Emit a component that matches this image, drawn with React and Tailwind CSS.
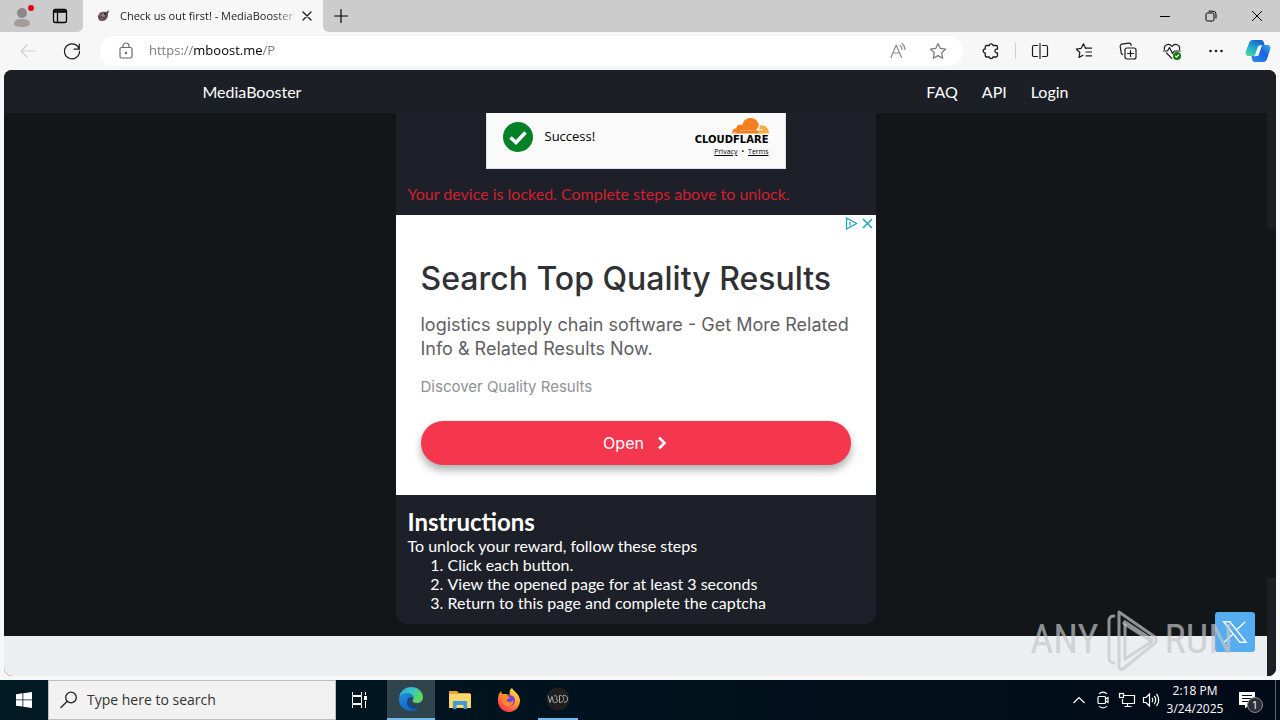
import { useState } from "react";

const steps = [
  "Click each button.",
  "View the opened page for at least 3 seconds",
  "Return to this page and complete the captcha",
];

function Icon({ size = 20, width = 1.2, className = "", children }) {
  return (
    <svg
      width={size}
      height={size}
      viewBox="0 0 20 20"
      fill="none"
      stroke="currentColor"
      strokeWidth={width}
      strokeLinecap="round"
      strokeLinejoin="round"
      className={className}
      aria-hidden="true"
    >
      {children}
    </svg>
  );
}

function ToolButton({ label, className = "text-[#1b1b1b]", children }) {
  return (
    <button
      aria-label={label}
      className={`flex h-8 w-11 shrink-0 items-center justify-center ${className}`}
    >
      {children}
    </button>
  );
}

function WindowButton({ label, children }) {
  return (
    <button
      aria-label={label}
      className="flex h-8 w-[46px] items-center justify-center text-black"
    >
      <svg
        width="12"
        height="12"
        viewBox="0 0 12 12"
        fill="none"
        stroke="currentColor"
        aria-hidden="true"
      >
        {children}
      </svg>
    </button>
  );
}

function TabStrip() {
  return (
    <div className="flex h-8 shrink-0 bg-[#f7f7f7]">
      <div className="flex w-[83px] shrink-0 items-center rounded-br-md bg-[#cccccc] pl-2">
        <button aria-label="Profile" className="flex w-8 justify-center pr-1">
          <svg width="28" height="28" viewBox="0 0 28 28" aria-hidden="true">
            <circle cx="14" cy="11" r="5" fill="#8b8785" />
            <path d="M6 22c0-4 4-5 8-5s8 1 8 5c0 2-4 3-8 3s-8-1-8-3z" fill="#a19d9b" />
            <circle cx="23" cy="6" r="3" fill="#e3000f" />
          </svg>
        </button>
        <button
          aria-label="Tab actions"
          className="flex w-10 justify-center text-black"
        >
          <Icon size={20} width={1.3}>
            <rect x="3.5" y="3.5" width="13" height="13" rx="2" />
            <path d="M4.500 5.500h11" strokeWidth="2.6" />
            <path d="M7.5 7v9" />
          </Icon>
        </button>
      </div>
      <div className="flex w-60 shrink-0 items-center rounded-t-lg bg-[#f7f7f7] pr-1 pl-3">
        <svg width="16" height="16" viewBox="0 0 16 16" aria-hidden="true">
          <path d="M3 8c1-4 5-5 8-4l3-2-1 4c0 4-2 7-6 7-3 0-4-2-4-5z" fill="#5c4f52" />
          <path d="M4 5l3 2-3 1zM5 11l3-1-1 3z" fill="#c0485a" />
          <path d="M8 5l3 1-2 3-3-1z" fill="#8f8a90" />
          <circle cx="10" cy="6" r="1" fill="#1d1a1c" />
        </svg>
        <span className="ml-[9px] min-w-0 flex-1 text-[11px] whitespace-nowrap text-[#1b1b1b] [mask-image:linear-gradient(90deg,#000_88%,rgba(0,0,0,0.2))]">
          Check us out first! - MediaBooster
        </span>
        <button
          aria-label="Close tab"
          className="flex w-6 shrink-0 justify-center text-[#1b1b1b]"
        >
          <Icon size={16} width={1.6}>
            <path d="M5 5l10 10M15 5L5 15" />
          </Icon>
        </button>
      </div>
      <div className="flex min-w-0 flex-1 items-center justify-between rounded-bl-md bg-[#cccccc]">
        <button
          aria-label="New tab"
          className="flex h-8 w-9 items-center justify-center text-black"
        >
          <Icon>
            <path d="M10 3.5v13M3.5 10h13" />
          </Icon>
        </button>
        <div className="flex">
          <WindowButton label="Minimize">
            <path d="M1 6.5h10" />
          </WindowButton>
          <WindowButton label="Restore">
            <rect x="1" y="3" width="8" height="8" rx="1.5" />
            <path d="M3.5 1.2h4.5a3 3 0 0 1 3 3v4.3" />
          </WindowButton>
          <WindowButton label="Close">
            <path d="M1 1l10 10M11 1L1 11" />
          </WindowButton>
        </div>
      </div>
    </div>
  );
}

function Toolbar() {
  const [url, setUrl] = useState("https://mboost.me/P");

  return (
    <div className="flex h-[38px] shrink-0 items-center bg-[#f7f7f7] pr-0.5 pl-1.5">
      <ToolButton label="Back" className="text-[#cfcfcf]">
        <Icon>
          <path d="M17 10H3M9 4l-6 6 6 6" />
        </Icon>
      </ToolButton>
      <ToolButton label="Refresh">
        <Icon>
          <path d="M17.2 8.2A7.5 7.5 0 1 0 17.5 10M17.3 3v5.2h-5.2" />
        </Icon>
      </ToolButton>
      <div className="mx-1.5 flex h-[30px] min-w-0 flex-1 items-center rounded-full bg-white pl-4">
        <Icon className="shrink-0 text-[#6b6b6b]">
          <rect x="4" y="6.5" width="12" height="10.5" rx="1.5" />
          <path d="M7 6.5V5a3 3 0 0 1 6 0v1.5" />
          <circle cx="10" cy="12" r=".6" fill="currentColor" />
        </Icon>
        <input
          aria-label="Address"
          value={url}
          onChange={(e) => setUrl(e.target.value)}
          className="ml-[13px] min-w-0 flex-1 bg-[linear-gradient(90deg,#767676_44px,#000_44px,#000_113px,#767676_113px)] bg-clip-text text-[13px] text-transparent outline-none"
        />
        <button aria-label="Read aloud" className="flex w-10 justify-center text-[#8a8a8a]">
          <Icon>
            <path d="M3 16.5L8.2 4l5.3 12.500M5 12h6.500" />
            <path d="M12 4.500a5 5 0 0 1 2 4M14 2.500a8 8 0 0 1 3 6" />
          </Icon>
        </button>
        <button
          aria-label="Add to favorites"
          className="mr-[5px] flex w-10 justify-center text-[#767676]"
        >
          <Icon>
            <path d="M10 2.500l2.300 4.900 5.300.7-3.900 3.700 1 5.400L10 14.600l-4.700 2.600 1-5.400L2.400 8.100l5.300-.7z" />
          </Icon>
        </button>
      </div>
      <ToolButton label="Extensions">
        <Icon width={1.3}>
          <path d="M5.500 4.500h2.700a2 2 0 0 1 3.900 0h2.900a1.500 1.500 0 0 1 1.500 1.500v2.200h-.8a1.800 1.800 0 0 0 0 3.600h.8V14.500A1.500 1.500 0 0 1 15 16h-2.900a2 2 0 0 1-3.900 0H5.500A1.500 1.500 0 0 1 4.200 14.500v-2.500a2 2 0 0 1 0-4V6a1.500 1.500 0 0 1 1.300-1.500z" />
        </Icon>
      </ToolButton>
      <span className="mx-0.5 h-4 w-px shrink-0 bg-[#cfcfcf]" />
      <ToolButton label="Split screen">
        <Icon>
          <path d="M7.500 4.500H4A1.500 1.500 0 0 0 2.500 6v8A1.500 1.500 0 0 0 4 15.500h3.500M12.500 4.500H16A1.500 1.500 0 0 1 17.500 6v8a1.500 1.500 0 0 1-1.500 1.500h-3.500M10 2.500v15" />
        </Icon>
      </ToolButton>
      <ToolButton label="Favorites">
        <Icon>
          <path d="M11.500 7.200L9.400 2.800 7.200 7.300l-4.900.7 3.500 3.500-.8 4.900 4-2.100" />
          <path d="M11.500 7.200H17.500M12 11h5.500M12 14.800h5.500" />
        </Icon>
      </ToolButton>
      <ToolButton label="Collections">
        <Icon>
          <rect x="7" y="7" width="11" height="11" rx="2" />
          <path d="M12.500 9.500v6M9.500 12.500h6M4.800 13.500A2 2 0 0 1 3.200 11.800L2.200 5.500a2 2 0 0 1 1.700-2.300l7-1a2 2 0 0 1 2.200 1.700v.4" />
        </Icon>
      </ToolButton>
      <ToolButton label="Browser essentials">
        <Icon>
          <path d="M2.500 8.500C1.500 4 7 1.500 10 5.500c3-4 8.500-1.500 7.500 3M4.500 12l5.300 5.300" />
          <path d="M1.500 10h4l2-3.500 3 6 1.800-2.500h6" />
          <circle cx="15" cy="15" r="3.400" fill="#107c10" stroke="#107c10" />
          <path d="M13.500 15.200l1 1 2-2.200" stroke="#fff" />
        </Icon>
      </ToolButton>
      <ToolButton label="Settings and more">
        <svg width="20" height="20" viewBox="0 0 20 20" fill="currentColor" aria-hidden="true">
          <circle cx="4.500" cy="10" r="1.300" />
          <circle cx="10" cy="10" r="1.300" />
          <circle cx="15.500" cy="10" r="1.300" />
        </svg>
      </ToolButton>
      <button aria-label="Copilot" className="flex w-10 shrink-0 justify-center">
        <svg width="26" height="26" viewBox="0 0 26 26" aria-hidden="true">
          <defs>
            <linearGradient id="copilotLeft" x1="0" y1="1" x2="0.600" y2="0">
              <stop offset="0" stopColor="#5fdc8a" />
              <stop offset="0.500" stopColor="#1fb0d0" />
              <stop offset="1" stopColor="#1667c8" />
            </linearGradient>
            <linearGradient id="copilotRight" x1="0" y1="1" x2="1" y2="0">
              <stop offset="0" stopColor="#2a8cf5" />
              <stop offset="0.600" stopColor="#1b62dc" />
              <stop offset="1" stopColor="#35b5f5" />
            </linearGradient>
          </defs>
          <path
            d="M8 2h8c2 0 2.500 1 3 3l.5 2h-3c-2 0-3 1-3.500 3l-1.500 5c-.5 2-1.500 3-3.500 3H4c-3 0-4-2-3-5L4 5c.7-2 2-3 4-3z"
            fill="url(#copilotLeft)"
          />
          <path
            d="M18 24h-8c-2 0-2.500-1-3-3l-.5-3H9c2 0 3-1 3.500-3L14 10c.500-2 1.500-3 3.500-3H22c3 0 4 2 3 5l-3 9c-.7 2-2 3-4 3z"
            fill="url(#copilotRight)"
          />
          <path d="M13 8.500l4-1.500-3.500 10.500-4 1z" fill="#fff" />
        </svg>
      </button>
    </div>
  );
}

function SiteNav() {
  return (
    <nav className="h-[43px] shrink-0 bg-[#1d1f27] px-4 text-base text-white">
      <div className="mx-auto flex h-full w-full max-w-[866px] items-center justify-between">
        <a href="#home">MediaBooster</a>
        <div className="flex gap-6">
          <a href="#faq">FAQ</a>
          <a href="#api">API</a>
          <a href="#login">Login</a>
        </div>
      </div>
    </nav>
  );
}

function Captcha() {
  return (
    <div className="mx-auto flex h-14 w-full max-w-[300px] justify-between border border-t-0 border-[#e0e0e0] bg-[#fafafa] px-4 font-['Open_Sans','Noto_Sans',sans-serif] text-black">
      <div className="flex items-center gap-3 pb-2">
        <svg width="30" height="30" viewBox="0 0 30 30" aria-hidden="true">
          <circle cx="15" cy="15" r="15" fill="#038127" />
          <path d="M7.500 15.500l5.500 5 9.500-10" fill="none" stroke="#fff" strokeWidth="3.600" />
        </svg>
        <span className="text-[13px]">Success!</span>
      </div>
      <div className="flex flex-col items-end pt-1">
        <svg width="37" height="17" viewBox="0 0 37 17" aria-hidden="true">
          <path
            d="M0 16.500C0 13 2 11.300 4.500 11.300 4 8 8 6.500 10.300 8 12-1 25-2 27 8.500l-1.500 5c-.3 1-1 1.500-2 1.500H3z"
            fill="#f38020"
          />
          <path d="M28 8.500c5-1 9 3 9 8H24l2.500-1.500z" fill="#faae40" />
          <path d="M0 16.500h26l1-2.500H8z" fill="#f38020" />
          <path d="M8 13h16l3-4-1 3.500h5v.7H8z" fill="#fff" />
        </svg>
        <span className="font-['DejaVu_Sans',sans-serif] text-[10px] leading-[11px] font-bold">
          CLOUDFLARE
        </span>
        <div className="flex gap-1 pt-0.5 text-[7px] leading-[10px]">
          <a href="#privacy" className="underline">
            Privacy
          </a>
          <span>•</span>
          <a href="#terms" className="underline">
            Terms
          </a>
        </div>
      </div>
    </div>
  );
}

function Ad() {
  return (
    <section className="bg-white px-[25px] pt-0.5 pb-[30px] font-['Inter',sans-serif]">
      <div className="-mr-[23px] flex h-3 items-center justify-end gap-[3px]">
        <a href="#adchoices" aria-label="AdChoices">
          <svg width="13" height="13" viewBox="0 0 13 13" fill="none" stroke="#1fa7b8" strokeWidth="1.300" aria-hidden="true">
            <path d="M1.500 1l10 5.500-10 5.500z" />
            <path d="M5 5v3.500" />
          </svg>
        </a>
        <button aria-label="Close ad">
          <svg width="13" height="13" viewBox="0 0 13 13" stroke="#1fa7b8" strokeWidth="1.500" aria-hidden="true">
            <path d="M2 2l9 9M11 2l-9 9" />
          </svg>
        </button>
      </div>
      <h2 className="pt-[30px] text-[32px] leading-10 font-medium whitespace-nowrap text-[#303134]">
        Search Top Quality Results
      </h2>
      <p className="pt-3.5 text-lg leading-6 whitespace-nowrap text-[#5f6063]">
        logistics supply chain software - Get More Related
        <br />
        Info &amp; Related Results Now.
      </p>
      <p className="pt-3.5 text-[15px] leading-6 text-[#909194]">Discover Quality Results</p>
      <button className="mt-[22px] flex h-11 w-full items-center justify-center gap-3 rounded-full bg-[#f4364e] text-base text-white shadow-[0_5px_9px_rgba(0,20,20,0.350)]">
        Open
        <svg width="12" height="14" viewBox="0 0 12 14" fill="none" stroke="currentColor" strokeWidth="2.600" aria-hidden="true">
          <path d="M3 1.500L8.500 7 3 12.500" />
        </svg>
      </button>
    </section>
  );
}

function Watermark() {
  return (
    <div
      aria-hidden="true"
      className="pointer-events-none absolute right-[43px] bottom-0 flex items-center gap-1.5 font-['Roboto_Condensed','Roboto',sans-serif] text-[40px] leading-[72px] text-[#c4c6c8]/70"
    >
      <span>ANY</span>
      <svg width="54" height="66" viewBox="0 0 54 66" fill="none" stroke="currentColor" strokeLinejoin="round" strokeLinecap="round">
        <path d="M14 5v54M9 9a5 5 0 0 0-5 4v38a5 5 0 0 0 5 5M14 5l36 25a4 4 0 0 1 0 6L18 62c-3 1-4-1-4-3" strokeWidth="3" />
        <path d="M20 18v34l26-17" strokeWidth="3" />
        <path d="M20 16l26 17" strokeWidth="5" />
      </svg>
      <span>RUN</span>
    </div>
  );
}

function Page() {
  return (
    <div className="relative mx-1 mb-1 flex min-h-0 flex-1 overflow-hidden rounded-lg bg-[#131619] font-['Lato',sans-serif]">
      <div className="flex min-w-0 flex-1 flex-col">
        <SiteNav />
        <main className="mx-auto mb-3 w-full max-w-[480px] rounded-b-xl bg-[#1d2028] pb-3 text-base leading-[19px] text-white">
          <Captcha />
          <p className="px-3 pt-[15px] pb-3 text-[#d11f2f]">
            Your device is locked. Complete steps above to unlock.
          </p>
          <Ad />
          <div className="px-3 pt-3">
            <h1 className="text-2xl leading-[29px] font-bold">Instructions</h1>
            <p>To unlock your reward, follow these steps</p>
            <ol className="list-decimal pl-10">
              {steps.map((step) => (
                <li key={step}>{step}</li>
              ))}
            </ol>
          </div>
        </main>
        <footer className="min-h-10 flex-1 bg-[#eceff1]" />
      </div>
      <div className="flex w-[9px] shrink-0 flex-col justify-between bg-[#16151b]">
        <div className="h-[158px] bg-[#1f1e27]" />
        <div className="h-[98px] bg-[#1f1e27]" />
      </div>
      <a
        href="#share"
        aria-label="Share on X"
        className="absolute right-[21px] bottom-6 flex size-10 items-center justify-center rounded-[3px] bg-[#55acee] text-white"
      >
        <svg width="26" height="26" viewBox="0 0 24 24" fill="none" stroke="currentColor" strokeWidth="1.300" aria-hidden="true">
          <path d="M1.500 2.500h5.800l15 19h-5.800zM21.500 2.500l-8.400 7.800M10.400 13.600L2 21.500" />
        </svg>
      </a>
      <Watermark />
    </div>
  );
}

function Taskbar() {
  return (
    <div className="flex h-10 shrink-0 bg-linear-to-r from-[#001a23] via-[#00121d] to-[#030a18] text-white">
      <button aria-label="Start" className="flex w-12 shrink-0 items-center justify-center">
        <svg width="16" height="16" viewBox="0 0 16 16" fill="currentColor" aria-hidden="true">
          <path d="M0 2.200l6.500-.9v6.200H0zM7.300 1.200L16 0v7.500H7.300zM0 8.300h6.500v6.300L0 13.700zM7.300 8.300H16V16l-8.700-1.200z" />
        </svg>
      </button>
      <label className="flex w-72 shrink-0 items-center border border-[#bdbdbd] bg-[#f2f2f2] pl-2.5">
        <svg width="20" height="20" viewBox="0 0 20 20" fill="none" stroke="#222" strokeWidth="1.300" aria-hidden="true">
          <circle cx="12" cy="7.500" r="5.300" />
          <path d="M8.200 11.300L1.500 18" />
        </svg>
        <input
          aria-label="Search"
          placeholder="Type here to search"
          className="ml-2 min-w-0 flex-1 bg-transparent text-sm text-black outline-none placeholder:text-[#333]"
        />
      </label>
      <div className="flex min-w-0 flex-1 gap-px">
        <button aria-label="Task view" className="mr-0.5 flex w-12 items-center justify-center">
          <svg width="18" height="18" viewBox="0 0 18 18" fill="none" stroke="currentColor" aria-hidden="true">
            <path d="M1.500 1v3.500h9V1M1.500 17v-3.500h9V17M1.500 5.500v7h9v-7zM14.500 1v3M14.500 10v7" />
            <rect x="13.500" y="5.500" width="2" height="3" fill="currentColor" />
          </svg>
        </button>
        <button
          aria-label="Edge"
          className="flex w-12 items-center justify-center border-b-2 border-[#76b9ed] bg-[#30444e]"
        >
          <svg width="26" height="26" viewBox="0 0 26 26" aria-hidden="true">
            <defs>
              <linearGradient id="edgeTop" x1="0" y1="0" x2="1" y2="0.400">
                <stop offset="0" stopColor="#2aa7e0" />
                <stop offset="0.500" stopColor="#31c3d0" />
                <stop offset="1" stopColor="#5fd95a" />
              </linearGradient>
              <linearGradient id="edgeSide" x1="0" y1="0" x2="0.800" y2="1">
                <stop offset="0" stopColor="#1f8fe0" />
                <stop offset="1" stopColor="#0f5fb5" />
              </linearGradient>
            </defs>
            <path d="M1 12C2 5 7 1 13 1c7 0 12 5 12 10 0 4-3 6-6.500 6-3 0-4-1.200-4-2 0-.800 1-1.200 1-3 0-2-2-4.500-6-4.500C5 7.500 2 9.500 1 12z" fill="url(#edgeTop)" />
            <path d="M1 12c1-2.500 4.500-4.500 8.500-4.500 4 0 6 2.500 6 4.500-3-2-6.500 0-6.500 4 0 5 5 8 10 6.500 1.500-.5 2.800-1 3.500-1.800C20.500 23.500 17 25 13 25 5 25 .5 18.500 1 12z" fill="url(#edgeSide)" />
            <path d="M12 11.500c-2 1-3 2.500-3 4.500 0 5 5 8 10 6.500 1.500-.5 2.800-1 3.500-1.800-6 2.300-13-1.700-10.500-9.200z" fill="#0c4a93" />
          </svg>
        </button>
        <button aria-label="File Explorer" className="flex w-12 items-center justify-center">
          <svg width="22" height="20" viewBox="0 0 22 20" aria-hidden="true">
            <path d="M0 1h8l2 2h11v4H0z" fill="#e8a33a" />
            <rect y="4" width="22" height="14" fill="#fcd769" />
            <path d="M4 19v-8h14v8h-3.500v-4h-7v4z" fill="#3b9bdc" />
          </svg>
        </button>
        <button aria-label="Firefox" className="flex w-12 items-center justify-center">
          <svg width="24" height="24" viewBox="0 0 24 24" aria-hidden="true">
            <defs>
              <linearGradient id="fox" x1="0.900" y1="0" x2="0.200" y2="1">
                <stop offset="0" stopColor="#fff04a" />
                <stop offset="0.450" stopColor="#ff9a2a" />
                <stop offset="1" stopColor="#ff2a5a" />
              </linearGradient>
            </defs>
            <path d="M2 6l2-3 1 3 4 0 4 1c-1-3 0-6 2-7 1 3 7 5 8 12 0 7-5 12-11 12S1 19 1 13c0-3 0-5 1-7z" fill="url(#fox)" />
            <circle cx="12.500" cy="12.500" r="5.500" fill="#7a3fe0" />
            <path d="M6 8c3-1 5 0 7 1.500-1 1.500-3 1-3.500 2.500 1 3 5 3 6.500 0 1 4-2 7-6 6s-5.500-5-4-10z" fill="#ff8a2a" />
          </svg>
        </button>
        <button aria-label="Recorder" className="flex w-12 items-center justify-center">
          <span className="flex h-10 w-10 items-center justify-center border-b-2 border-[#76b9ed]">
            <svg width="24" height="24" viewBox="0 0 24 24" fill="none" stroke="#a9a9a9" aria-hidden="true">
              <circle cx="12" cy="12" r="11.500" fill="#1f1f1f" stroke="none" />
              <path d="M2 8.500l2 7 2-6 1.500 6M8 9c3-1 4 1 2 3 3 0 2 4-1.500 3.500M13.500 15.500v-7c5-1 6 7 0 7M17 8.500c6-1 6 7 1 7" />
            </svg>
          </span>
        </button>
      </div>
      <div className="flex shrink-0 items-center">
        <button aria-label="Show hidden icons" className="flex w-6 justify-center">
          <svg width="14" height="8" viewBox="0 0 14 8" fill="none" stroke="currentColor" strokeWidth="1.200" aria-hidden="true">
            <path d="M1.500 7L7 1.500 12.500 7" />
          </svg>
        </button>
        <button aria-label="Camera" className="flex w-6 justify-center">
          <svg width="14" height="18" viewBox="0 0 14 18" fill="none" stroke="currentColor" strokeWidth="1.200" aria-hidden="true">
            <rect x="2" y="5.500" width="7.500" height="7" rx="1" />
            <path d="M9.500 8l2.500-1.500v5L9.500 10M3 3c2-2.500 6-2.500 8 0M3 15c2 2.500 6 2.500 8 0" />
          </svg>
        </button>
        <button aria-label="Network" className="flex w-6 justify-center">
          <svg width="18" height="16" viewBox="0 0 18 16" fill="none" stroke="currentColor" strokeWidth="1.200" aria-hidden="true">
            <path d="M6 3.500h10.500v8H4.500V7M9.500 11.500V14M6.500 14.500h7" />
            <rect x="1.500" y="1.500" width="4" height="4" />
          </svg>
        </button>
        <button aria-label="Volume" className="flex w-6 justify-center">
          <svg width="18" height="16" viewBox="0 0 18 16" fill="none" stroke="currentColor" strokeWidth="1.200" aria-hidden="true">
            <path d="M1.500 5.500H4L7.500 2v12L4 10.500H1.500zM10 6c1 1 1 3 0 4M12.200 4c2 2.200 2 5.800 0 8M14.500 2c3 3.500 3 8.500 0 12" />
          </svg>
        </button>
        <div className="w-16 text-center text-xs leading-[18px] whitespace-nowrap">
          2:18 PM
          <br />
          3/24/2025
        </div>
        <button aria-label="Notifications" className="relative flex w-10 justify-center">
          <svg width="18" height="18" viewBox="0 0 18 18" aria-hidden="true">
            <path d="M1 1h16v13h-6l-4 3.500V14H1z" fill="#fff" />
            <path d="M4 4.500h10M4 7.500h10M4 10.500h7" stroke="#030a18" strokeWidth="1.200" />
          </svg>
          <span className="absolute top-1.5 left-5 flex size-4 items-center justify-center rounded-full border border-[#8a8a8a] bg-[#2b2f36] text-[11px] leading-4">
            1
          </span>
        </button>
        <span className="ml-2 h-full w-px bg-[#5a6068]" />
        <span className="w-1" />
      </div>
    </div>
  );
}

export default function App() {
  return (
    <div className="flex min-h-screen flex-col bg-[#f7f7f7] font-['Open_Sans','Noto_Sans',sans-serif]">
      <TabStrip />
      <Toolbar />
      <Page />
      <Taskbar />
    </div>
  );
}
